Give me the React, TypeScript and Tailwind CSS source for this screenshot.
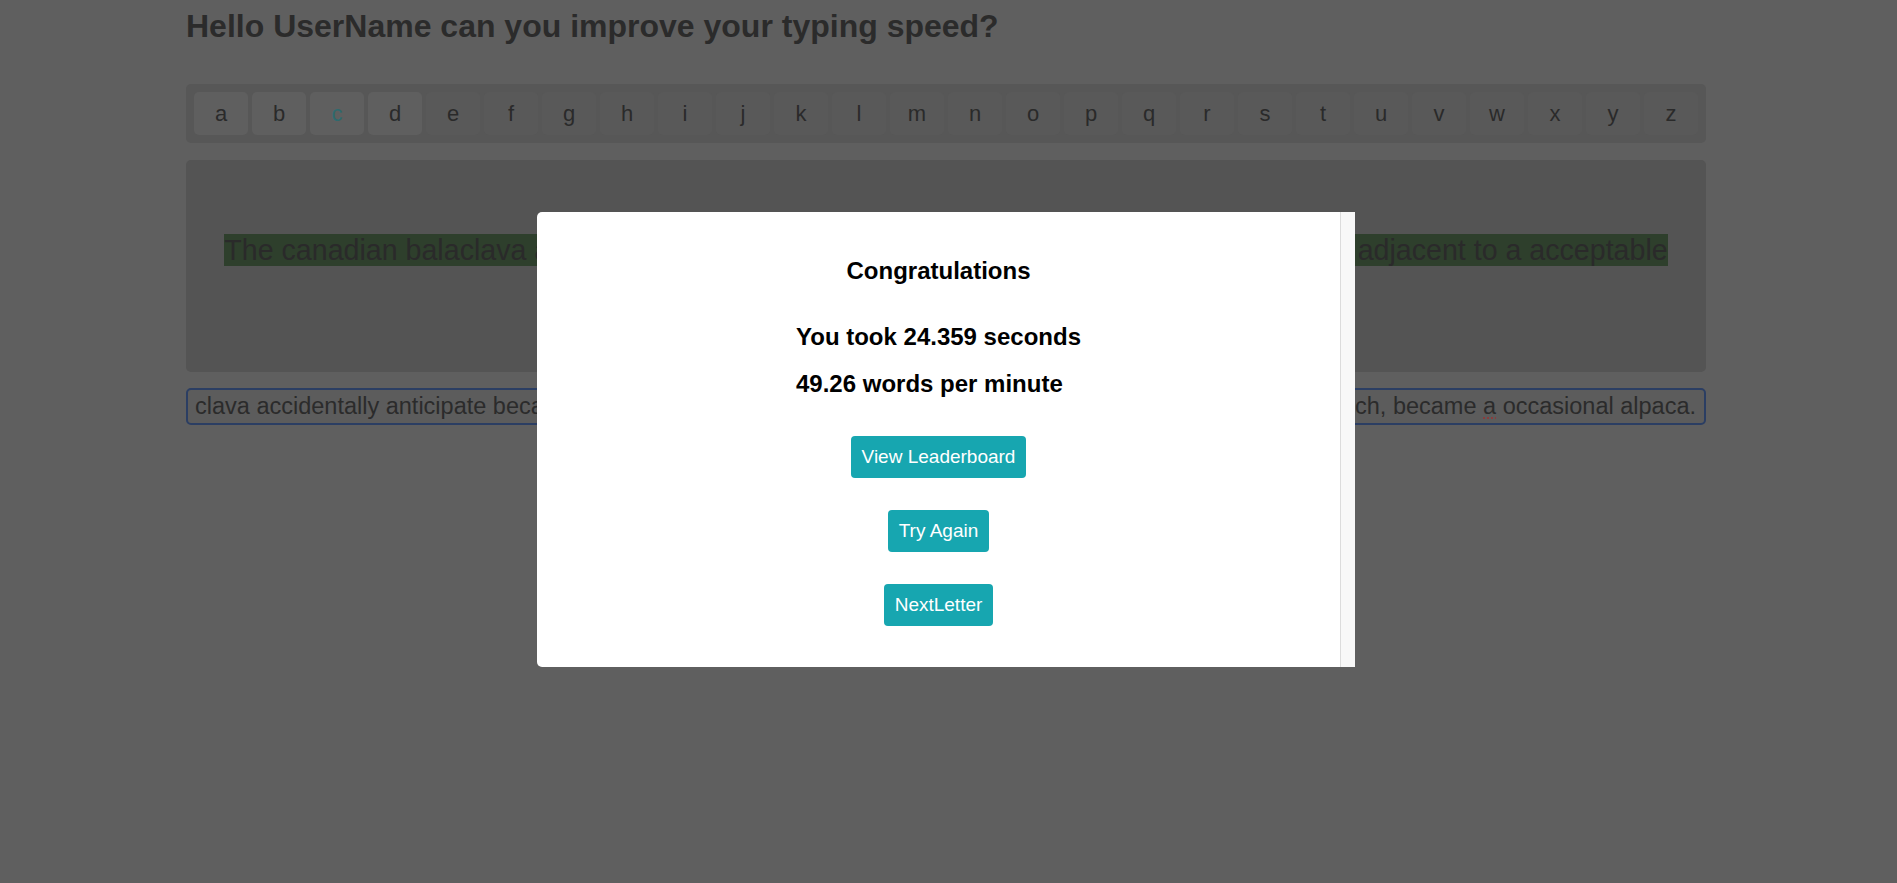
import React from "react";

const letters = "abcdefghijklmnopqrstuvwxyz".split("");
const done = new Set(["a", "b", "c", "d"]);

export default function App() {
  return (
    <div className="relative h-[883px] w-full overflow-hidden bg-[#5f5f5f] font-['Liberation_Sans',Arial,sans-serif] text-[#2b2b2b]">
      <div className="ml-[186px] w-[1520px]">
        <h1 className="mt-[8px] text-[32px] font-bold leading-[37px] text-[#2b2b2b]">
          Hello UserName can you improve your typing speed?
        </h1>

        <div className="mt-[39px] flex gap-[4px] rounded-[5px] bg-[#575757] p-[8px]">
          {letters.map((l) => (
            <div
              key={l}
              className={
                "flex h-[43px] flex-1 items-center justify-center rounded-[5px] text-[22px] " +
                (done.has(l) ? "bg-[#5f5f5f] " : "bg-[#595959] ") +
                (l === "c" ? "text-[#2e6a6e]" : "text-[#2a2a2a]")
              }
            >
              {l}
            </div>
          ))}
        </div>

        <div className="mt-[17px] h-[212px] rounded-[5px] bg-[#545454] px-[20px] pt-[69px] text-center text-[28.6px] text-[#2a2a2a]">
          <span className="bg-[#2e3f2c]">
            The canadian balaclava accidentally anticipate because the mischievous beaver is sitting adjacent to a acceptable
            <br />
            ostrich, became a occasional alpaca.
          </span>
        </div>

        <div className="mt-[16px] flex h-[37px] items-center rounded-[5px] border-2 border-[#2b3e63] bg-[#5c5c5c] pl-[7px] pr-[7px] text-[23.5px] text-[#2b2b2b]">
          <div className="min-w-0 flex-1 overflow-hidden whitespace-nowrap">
            clava accidentally anticipate because the mischievous beaver is sitting
          </div>
          <div className="flex min-w-0 flex-1 items-center justify-end overflow-hidden whitespace-nowrap">
            <span>
              beaver is sitting adjacent to a acceptable ostrich, became{" "}
              <span className="underline decoration-[#8a3d3d] decoration-dotted decoration-2 underline-offset-[4px]">a</span>{" "}
              occasional alpaca.
            </span>
            <span className="ml-[1px] inline-block h-[26px] w-[1px] bg-[#1e1e1e]" />
          </div>
        </div>
      </div>

      <div className="absolute left-[537px] top-[212px] flex h-[455px] w-[818px] overflow-hidden rounded-l-[5px] bg-white text-black">
        <div className="flex flex-1 flex-col items-center pt-[45px]">
          <h2 className="text-[24px] font-bold leading-[28px]">Congratulations</h2>
          <div className="mt-[38px] w-fit text-left text-[24px] font-bold leading-[28px]">
            <p>You took 24.359 seconds</p>
            <p className="mt-[19px]">49.26 words per minute</p>
          </div>
          <div className="mt-[38px] flex flex-col items-center gap-[32px]">
            <button className="flex h-[42px] items-center rounded-[4px] bg-[#17a6b0] px-[10.5px] text-[19px] text-white">
              View Leaderboard
            </button>
            <button className="flex h-[42px] items-center rounded-[4px] bg-[#17a6b0] px-[10.5px] text-[19px] text-white">
              Try Again
            </button>
            <button className="flex h-[42px] items-center rounded-[4px] bg-[#17a6b0] px-[10.5px] text-[19px] text-white">
              NextLetter
            </button>
          </div>
        </div>
        <div className="h-full w-[15px] border-l border-[#dcdcdc] bg-[#f8f8f8]" />
      </div>
    </div>
  );
}
